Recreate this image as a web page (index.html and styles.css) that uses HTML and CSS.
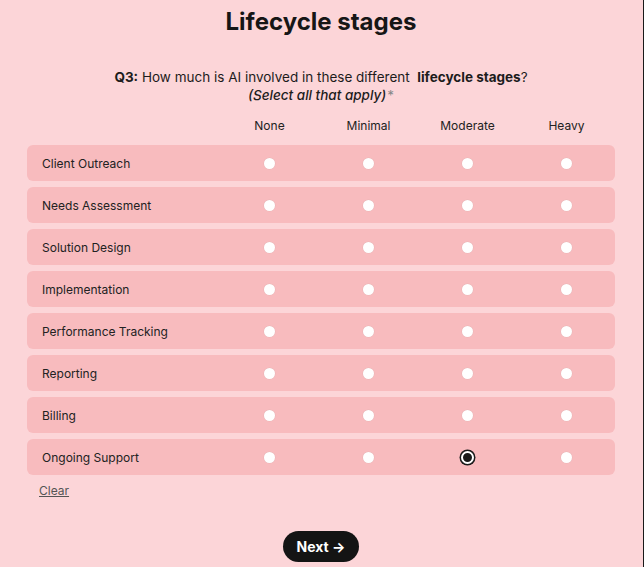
FILE: index.html
```html
<!DOCTYPE html><html lang="en"><head><meta charset="UTF-8"/>
<meta name="viewport" content="width=device-width, initial-scale=1" />
<title>Lifecycle stages</title>
<link rel="stylesheet" href="styles.css"></head><body>

<!-- survey page -->
<div class="page">
  <h1 class="title">Lifecycle stages</h1>

  <div class="question">
    <p class="q"><b>Q3:</b> How much is AI involved in these different &nbsp;<b>lifecycle stages</b>?</p>
    <p class="hint"><i>(Select all that apply)</i><span class="req">*</span></p>
  </div>

  <div class="matrix">
    <div class="head">
      <span></span><span>None</span><span>Minimal</span><span>Moderate</span><span>Heavy</span>
    </div>
    <div class="row"><span class="lbl">Client Outreach</span><i class="dot"></i><i class="dot"></i><i class="dot"></i><i class="dot"></i></div>
    <div class="row"><span class="lbl">Needs Assessment</span><i class="dot"></i><i class="dot"></i><i class="dot"></i><i class="dot"></i></div>
    <div class="row"><span class="lbl">Solution Design</span><i class="dot"></i><i class="dot"></i><i class="dot"></i><i class="dot"></i></div>
    <div class="row"><span class="lbl">Implementation</span><i class="dot"></i><i class="dot"></i><i class="dot"></i><i class="dot"></i></div>
    <div class="row"><span class="lbl">Performance Tracking</span><i class="dot"></i><i class="dot"></i><i class="dot"></i><i class="dot"></i></div>
    <div class="row"><span class="lbl">Reporting</span><i class="dot"></i><i class="dot"></i><i class="dot"></i><i class="dot"></i></div>
    <div class="row"><span class="lbl">Billing</span><i class="dot"></i><i class="dot"></i><i class="dot"></i><i class="dot"></i></div>
    <div class="row"><span class="lbl">Ongoing Support</span><i class="dot"></i><i class="dot"></i><i class="dot on"></i><i class="dot"></i></div>
  </div>

  <a class="clear" href="#">Clear</a>

  <div class="nav">
    <button class="next">Next <span class="arr">→</span></button>
  </div>
</div>

</body></html>
```

FILE: styles.css
```css
/* reset */
*{box-sizing:border-box;margin:0;padding:0}
body{font-family:Inter,"Noto Sans",Arial,sans-serif;background:#fcd5d8;color:#1c1c1c}
.page{width:644px;height:567px;border-right:1px solid #1a1a1a;padding:0 28px 0 27px;overflow:hidden}

/* heading */
.title{font-size:24px;font-weight:700;text-align:center;padding-top:8px;line-height:28px;color:#161616}
.question{text-align:center;margin-top:32px;font-size:13.5px;line-height:18px}
.q b{font-weight:700}
.hint i{font-weight:500}
.req{color:#888;margin-left:1px}

/* matrix */
.matrix{margin-top:11px;display:flex;flex-direction:column;gap:6px}
.head,.row{display:grid;grid-template-columns:193px repeat(4,99px);align-items:center}
.head{font-size:12px;height:20px;margin-bottom:4px;color:#222}
.head span{text-align:center}
.row{height:36px;background:#f8bbbe;border-radius:6px}
.lbl{font-size:12px;padding-left:15px;color:#222}
.dot{justify-self:center;width:11px;height:11px;border-radius:50%;background:#fff;box-shadow:0 0 0 .5px #e8b4b6}
.dot.on{width:13px;height:13px;background:#1a1a1a;border:2.5px solid #fff;box-shadow:0 0 0 1.5px #1a1a1a}

/* footer */
.clear{display:inline-block;margin:8px 0 0 12px;font-size:12px;color:#555;text-decoration:underline}
.nav{display:flex;justify-content:center;margin-top:32px}
.next{background:#141414;color:#fff;border:none;border-radius:16px;font-family:inherit;
      font-size:14px;font-weight:700;height:31px;padding:0 14px;cursor:pointer}
.arr{font-weight:700}
```
